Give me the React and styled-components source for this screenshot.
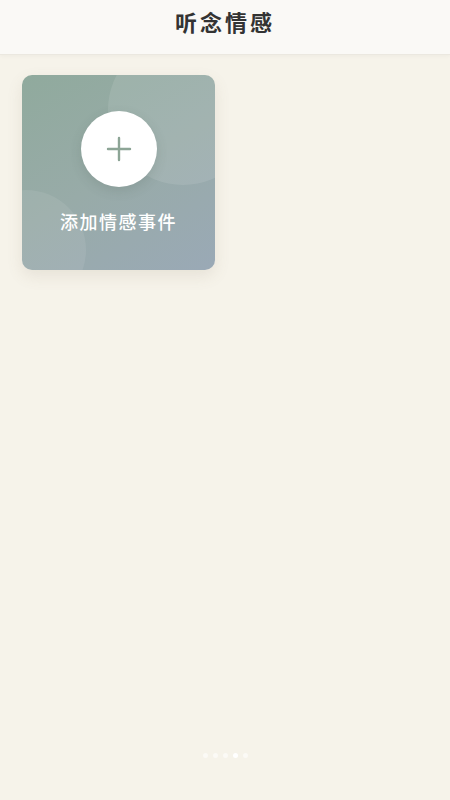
import React from 'react'
import styled, { createGlobalStyle } from 'styled-components'

const GlobalStyle = createGlobalStyle`
  html, body {
    margin: 0;
    padding: 0;
    background: #f6f3ea;
  }

  body {
    font-family: "Noto Sans CJK SC", "Noto Sans", sans-serif;
  }
`

const StyledPage = styled.div`
  width: 450px;
  height: 800px;
  display: flex;
  flex-direction: column;
  background: #f6f3ea;
  overflow: hidden;
`

const StyledHeader = styled.header`
  height: 54px;
  flex-shrink: 0;
  display: flex;
  align-items: center;
  justify-content: center;
  background: #faf9f6;
  border-bottom: 1px solid #ebe8e0;
  box-shadow: 0 1px 4px rgba(0, 0, 0, .04);
`

const StyledTitle = styled.h1`
  margin: 0 0 12px;
  font-size: 22px;
  font-weight: 700;
  letter-spacing: 3px;
  color: #333;
`

const StyledGrid = styled.div`
  flex: 1;
  display: grid;
  grid-template-columns: 193px;
  align-content: start;
  padding: 20px 22px;
`

const StyledCard = styled.div`
  position: relative;
  height: 195px;
  border-radius: 10px;
  overflow: hidden;
  background: linear-gradient(150deg, #90aa9d 0%, #98aba8 50%, #9aa9b6 100%);
  box-shadow: 0 6px 16px rgba(120, 110, 80, .12);
  display: flex;
  flex-direction: column;
  align-items: center;
`

const StyledBlob = styled.div`
  position: absolute;
  border-radius: 50%;
  background: rgba(255, 255, 255, ${(props) => props.alpha});
  width: ${(props) => props.size}px;
  height: ${(props) => props.size}px;
  left: ${(props) => props.x}px;
  top: ${(props) => props.y}px;
`

const StyledAddButton = styled.div`
  position: relative;
  margin-top: 36px;
  width: 76px;
  height: 76px;
  border-radius: 50%;
  background: #fff;
  display: flex;
  align-items: center;
  justify-content: center;
  box-shadow: 0 4px 12px rgba(60, 80, 70, .15);
`

const StyledCardLabel = styled.div`
  position: relative;
  margin-top: 21px;
  color: #fff;
  font-size: 18px;
  font-weight: 500;
  letter-spacing: 1.5px;
`

const StyledDots = styled.div`
  position: absolute;
  left: 0;
  right: 0;
  top: 753px;
  display: flex;
  justify-content: center;
  gap: 5px;
`

const StyledDot = styled.span`
  width: 5px;
  height: 5px;
  border-radius: 50%;
  background: ${(props) => (props.active ? '#ffffff' : 'rgba(255, 255, 255, .55)')};
`

const PlusIcon = () => (
  <svg width="26" height="26" viewBox="0 0 26 26">
    <path d="M13 2v22M2 13h22" stroke="#8da596" strokeWidth="2.4" strokeLinecap="round" />
  </svg>
)

const App = () => (
  <StyledPage>
    <GlobalStyle />
    <StyledHeader>
      <StyledTitle>听念情感</StyledTitle>
    </StyledHeader>

    <StyledGrid>
      <StyledCard>
        <StyledBlob size={150} x={86} y={-40} alpha={0.1} />
        <StyledBlob size={120} x={-56} y={115} alpha={0.08} />
        <StyledAddButton>
          <PlusIcon />
        </StyledAddButton>
        <StyledCardLabel>添加情感事件</StyledCardLabel>
      </StyledCard>
    </StyledGrid>

    <StyledDots>
      {[0, 1, 2, 3, 4].map((i) => (
        <StyledDot key={i} active={i === 3} />
      ))}
    </StyledDots>
  </StyledPage>
)

export default App
